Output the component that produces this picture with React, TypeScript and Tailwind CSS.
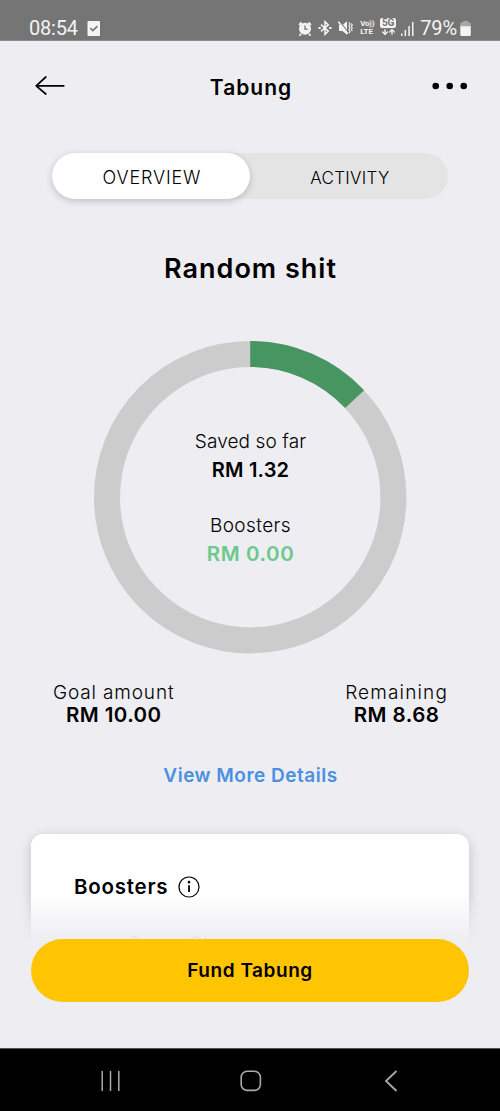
import { useState } from 'react'
import { ArrowDown, ArrowUp } from 'lucide-react'

const SAVED = 1.32
const GOAL = 10

function AlarmIcon() {
  return (
    <svg width="14" height="15" viewBox="0 0 14 15" fill="none">
      <path d="M1 4 3.6 1.5M13 4l-2.6-2.5M3 13l-1.5 1.6M11 13l1.5 1.6" stroke="#f4f4f4" strokeWidth="1.9" />
      <circle cx="7" cy="7.8" r="6" fill="#f4f4f4" />
      <path d="M7 4.6v3.5h2.7" stroke="#757575" strokeWidth="1.3" />
    </svg>
  )
}

function BluetoothIcon() {
  return (
    <svg width="14" height="16" viewBox="0 0 14 16" fill="none" stroke="#f4f4f4" strokeWidth="1.5">
      <path d="m3 4.6 7.3 6.5L7 14.4V1.6l3.3 3.3L3 11.4" />
      <path d="M.5 8h2.2M11.2 8h2.3" strokeWidth="1.8" />
    </svg>
  )
}

function MuteIcon() {
  return (
    <svg width="15" height="16" viewBox="0 0 15 16" fill="none">
      <path d="M1 5h3.5L9 1.3v13.4L4.5 11H1z" fill="#f4f4f4" />
      <path d="M1.4 1.2l9 11.4" stroke="#757575" strokeWidth="1.2" />
      <path d="m.4 1.8 9.4 12" stroke="#f4f4f4" strokeWidth="1.4" />
      <path d="m11 2.5 1 1.8-1 1.8 1 1.8-1 1.8 1 1.8-1 1.8M13.3 3.5l1 1.5-1 1.5 1 1.5-1 1.5 1 1.5" stroke="#f4f4f4" strokeWidth="1.1" />
    </svg>
  )
}

function StatusBar() {
  return (
    <div className="flex h-[41px] items-end border-b border-[#8d8d8d] bg-[#757575] pr-[29px] pb-px pl-[29px] font-[Roboto,sans-serif] text-[#f4f4f4]">
      <span className="text-[20px] leading-[22px] tracking-[-0.2px]">08:54</span>
      <svg className="mb-[3px] ml-[9px]" width="14" height="15" viewBox="0 0 14 15" fill="none">
        <rect x=".5" width="12.5" height="15" rx="1" fill="#f4f4f4" />
        <path d="m3.2 7 2.6 2.6 4.6-4.4" stroke="#757575" strokeWidth="1.7" />
      </svg>
      <div className="ml-auto flex items-end">
        <div className="mb-[3px] flex items-center">
          <AlarmIcon />
          <span className="w-[6px]" />
          <BluetoothIcon />
          <span className="w-[6px]" />
          <MuteIcon />
        </div>
        <div className="mb-[3px] ml-[7px] w-[15px] text-[8px] leading-[8px] font-bold">
          <div className="whitespace-nowrap tracking-[-0.3px]">Vo))</div>
          <div className="whitespace-nowrap">LTE</div>
        </div>
        <div className="mb-[3px] ml-[5px] flex w-4 flex-col items-center">
          <span className="flex h-[10px] w-4 items-center justify-center rounded-[2px] bg-[#f4f4f4] text-[10px] leading-[10px] font-bold text-[#757575]">5G</span>
          <span className="flex h-[8px]">
            <ArrowDown size={8} strokeWidth={4} className="-mr-px" />
            <ArrowUp size={8} strokeWidth={4} />
          </span>
        </div>
        <svg className="mb-[3px] ml-[5px]" width="14" height="14" viewBox="0 0 14 14" fill="#f4f4f4">
          <rect x="0" y="11.5" width="1.5" height="2.5" />
          <rect x="3.6" y="8" width="1.5" height="6" />
          <rect x="7.3" y="4" width="1.5" height="10" />
          <rect x="11" y="0" width="1.5" height="14" />
        </svg>
        <span className="ml-[5px] text-[20px] leading-[22px] tracking-[-0.1px]">79%</span>
        <svg className="mb-[3px] ml-[3px]" width="11" height="15" viewBox="0 0 11 15">
          <path d="M3 0h5v1.5h1.5a1.3 1.3 0 0 1 1.3 1.3V6H.3V2.8a1.3 1.3 0 0 1 1.3-1.3H3z" fill="#a9a9a9" />
          <path d="M.3 5.2h10.5v8.5a1.2 1.2 0 0 1-1.2 1.2H1.5a1.2 1.2 0 0 1-1.2-1.2z" fill="#f4f4f4" />
        </svg>
      </div>
    </div>
  )
}

function Header() {
  return (
    <header className="flex h-[112px] items-start justify-between pt-[31px] pr-8 pl-[35px]">
      <button className="mt-[3px] w-[37px]">
        <svg width="30" height="20" viewBox="0 0 30 20" fill="none" stroke="#000" strokeWidth="1.7" strokeLinecap="round" strokeLinejoin="round">
          <path d="M28.8 10.8H1.2M10.8 2 1.2 10.8l9.6 8.2" />
        </svg>
      </button>
      <h1 className="mr-px text-[21px] leading-[32px] font-semibold tracking-[1px]">Tabung</h1>
      <button className="mt-[10px]">
        <svg width="37" height="8" viewBox="0 0 37 8">
          <circle cx="4.7" cy="4" r="3.3" />
          <circle cx="18.7" cy="4" r="3.3" />
          <circle cx="32.7" cy="4" r="3.3" />
        </svg>
      </button>
    </header>
  )
}

function Tabs() {
  const [tab, setTab] = useState('OVERVIEW')

  return (
    <div className="mx-[52px] flex h-[46px] rounded-full bg-[#e4e4e4]">
      {['OVERVIEW', 'ACTIVITY'].map((name) => (
        <button
          key={name}
          onClick={() => setTab(name)}
          className={`h-[46px] w-[198px] rounded-full pl-[2px] font-light ${
            tab === name ? 'bg-white shadow-[0_2px_7px_rgba(0,0,0,0.2)]' : ''
          } ${name === 'OVERVIEW' ? 'pt-[2px] text-[18px] tracking-[0.85px]' : 'pt-[5px] text-[17px] tracking-[0.3px]'}`}
        >
          {name}
        </button>
      ))}
    </div>
  )
}

function SavingsRing() {
  const r = 143.2
  const length = 2 * Math.PI * r
  const percent = Math.floor((SAVED / GOAL) * 100)

  return (
    <div className="mx-auto mt-[54px] grid h-[314px] w-[314px] place-items-center">
      <svg className="col-start-1 row-start-1" width="314" height="314" viewBox="0 0 314 314" fill="none" strokeWidth="26">
        <circle cx="157.2" cy="157.2" r={r} stroke="#cccccc" />
        <circle
          cx="157.2"
          cy="157.2"
          r={r}
          stroke="#479661"
          strokeDasharray={`${(percent / 100) * length} ${length}`}
          transform="rotate(-90 157.2 157.2)"
        />
      </svg>
      <div className="col-start-1 row-start-1 pt-[2px] pl-px text-center">
        <p className="text-[19px] leading-[28px] font-light tracking-[0.1px]">Saved so far</p>
        <p className="text-[20px] leading-[28px] font-semibold tracking-[0.2px]">RM 1.32</p>
        <p className="mt-[28px] text-[19px] leading-[28px] font-light tracking-[0.4px]">Boosters</p>
        <p className="text-[20.5px] leading-[28px] font-semibold tracking-[0.6px] text-[#6bc98b]">RM 0.00</p>
      </div>
    </div>
  )
}

function Amounts() {
  return (
    <div className="mx-[52px] mt-[27px] -mb-px flex justify-between text-center">
      <div className="pl-px">
        <p className="text-[19px] leading-[23px] font-light tracking-[0.85px]">Goal amount</p>
        <p className="-mt-px mb-px text-[20.5px] leading-[23px] font-semibold tracking-[0.4px]">RM 10.00</p>
      </div>
      <div>
        <p className="text-[19px] leading-[23px] font-light tracking-[1.15px]">Remaining</p>
        <p className="-mt-px mb-px text-[20.5px] leading-[23px] font-semibold tracking-[0.5px]">RM 8.68</p>
      </div>
    </div>
  )
}

function BoostersCard() {
  return (
    <section className="relative mt-[36px] h-[112px] px-[31px] pt-[7px]">
      <div className="h-[140px] rounded-[12px] bg-white px-[43px] pt-[38px] shadow-[0_3px_12px_rgba(0,0,0,0.2)]">
        <div className="flex items-center gap-[10px]">
          <h3 className="text-[20.5px] leading-[30px] font-semibold tracking-[0.75px]">Boosters</h3>
          <svg width="22" height="22" viewBox="0 0 22 22" fill="none" stroke="#000" strokeWidth="1.2">
            <circle cx="11" cy="11" r="10" />
            <path d="M11 9.2v6.8" strokeWidth="1.8" />
            <circle cx="11" cy="6.2" r=".8" fill="#000" />
          </svg>
        </div>
        <p className="mt-[30px] ml-[55px] text-[18px] leading-[24px] tracking-[0.9px] text-[#777]">Spare Change</p>
      </div>
      <div className="absolute inset-x-0 top-[67px] h-[45px] bg-gradient-to-b from-[#eeedf2]/0 via-[#eeedf2]/55 to-[#eeedf2]/95" />
      <div className="absolute inset-x-0 top-[112px] h-[110px] bg-[#eeedf2]" />
    </section>
  )
}

function NavBar() {
  return (
    <nav className="relative flex h-[63px] items-center justify-between border-t border-[#555] bg-black pt-[2px] pr-[101px] pl-[100px]">
      <svg width="22" height="22" viewBox="0 0 22 22" stroke="#aaa" strokeWidth="1.5">
        <path d="M2.2 1v20M10.5 1v20M18.8 1v20" />
      </svg>
      <svg className="-ml-[5px]" width="22" height="22" viewBox="0 0 22 22" fill="none" stroke="#aaa" strokeWidth="1.6">
        <rect x="1.2" y="1.2" width="19.2" height="19.2" rx="6" />
      </svg>
      <svg width="15" height="22" viewBox="0 0 15 22" fill="none" stroke="#aaa" strokeWidth="1.8">
        <path d="M12.5 1 2 11l10.5 10" />
      </svg>
    </nav>
  )
}

export default function App() {
  return (
    <div className="flex h-[1111px] w-[500px] flex-col overflow-hidden bg-[#eeedf2] font-[Inter,sans-serif] text-black">
      <StatusBar />
      <Header />
      <Tabs />
      <h2 className="mt-[52px] -mb-px pl-px text-center text-[27px] leading-[36px] font-semibold tracking-[1px]">Random shit</h2>
      <SavingsRing />
      <Amounts />
      <button className="mx-auto mt-[35px] pl-px text-[19px] leading-[30px] font-semibold tracking-[0.5px] text-[#4a90e2]">
        View More Details
      </button>
      <BoostersCard />
      <button className="relative mr-[31px] ml-[31px] h-[63px] shrink-0 rounded-full bg-[#ffc503] pt-[2px] text-[19px] font-semibold tracking-[0.55px]">
        Fund Tabung
      </button>
      <div className="flex-1" />
      <NavBar />
    </div>
  )
}
